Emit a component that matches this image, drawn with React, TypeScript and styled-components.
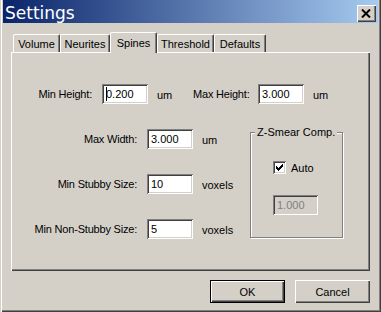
import React from "react";
import styled, { createGlobalStyle } from "styled-components";

const FACE = "#d4d0c8";
const SHADOW = "#808080";
const DARK = "#404040";

const GlobalStyle = createGlobalStyle`
  html, body {
    margin: 0;
    padding: 0;
    background: ${FACE};
  }
  body {
    font-family: "Liberation Sans", Arial, sans-serif;
    font-size: 11px;
    color: #000;
  }
`;

const Window = styled.div`
  width: 381px;
  height: 312px;
  box-sizing: border-box;
  background: ${FACE};
  box-shadow: inset 1px 0 ${FACE}, inset 2px 0 #fff, inset -1px -1px ${DARK},
    inset -2px -2px ${SHADOW};
  display: flex;
  flex-direction: column;
`;

const TitleBar = styled.div`
  margin: 0 3px;
  height: 23px;
  background: linear-gradient(to right, #0a246a, #a6caf0);
  display: flex;
  align-items: center;
  justify-content: space-between;
`;

const TitleText = styled.span`
  font-family: "DejaVu Sans", Verdana, sans-serif;
  font-size: 17px;
  line-height: 19px;
  height: 23px;
  box-sizing: border-box;
  padding: 4px 0 0 2px;
  color: #fff;
`;

const CloseButton = styled.div`
  width: 19px;
  height: 17px;
  margin: 4px 2px 0 0;
  background: ${FACE};
  box-shadow: inset 1px 1px #fff, inset -1px -1px ${DARK}, inset -2px -2px ${SHADOW};
  display: flex;
  align-items: center;
  justify-content: center;
  padding-right: 1px;
  box-sizing: border-box;
`;

const Body = styled.div`
  padding: 9px 11px 0;
  display: flex;
  flex-direction: column;
`;

const TabRow = styled.div`
  display: flex;
  align-items: flex-end;
  height: 20px;
  padding-left: 2px;
  position: relative;
  z-index: 1;
`;

const Tab = styled.div<{ $active?: boolean; $w: number }>`
  width: ${p => p.$w}px;
  height: ${p => (p.$active ? 21 : 18)}px;
  margin-bottom: ${p => (p.$active ? -1 : 0)}px;
  padding-bottom: ${p => (p.$active ? 1 : 0)}px;
  box-sizing: border-box;
  background: ${FACE};
  border-top: 1px solid #fff;
  border-left: 1px solid #fff;
  border-right: 1px solid ${DARK};
  border-radius: 2px 2px 0 0;
  box-shadow: inset -1px 0 ${SHADOW};
  display: flex;
  align-items: center;
  justify-content: center;
  white-space: nowrap;
`;

const Panel = styled.div`
  height: 219px;
  box-sizing: border-box;
  box-shadow: inset 1px 1px #fff, inset -1px -1px ${DARK}, inset -2px -2px ${SHADOW};
  padding-top: 32px;
  display: flex;
  flex-direction: column;
  gap: 25px;
`;

const TopRow = styled.div`
  display: grid;
  grid-template-columns: 91px 46px 45px 65px 46px auto;
  align-items: center;
  height: 20px;
`;

const Section = styled.div`
  display: flex;
  align-items: flex-start;
`;

const FieldGrid = styled.div`
  display: grid;
  grid-template-columns: 136px 46px 57px;
  grid-auto-rows: 20px;
  row-gap: 25px;
  align-items: center;
`;

const Label = styled.span`
  text-align: right;
  padding-right: 10px;
  white-space: nowrap;
  letter-spacing: -0.2px;
`;

const Unit = styled.span`
  padding: 2px 0 0 9px;
  white-space: nowrap;
`;

const TextBox = styled.div<{ $disabled?: boolean; $w?: number }>`
  width: ${p => p.$w ?? 46}px;
  height: 20px;
  box-sizing: border-box;
  background: ${p => (p.$disabled ? FACE : "#fff")};
  color: ${p => (p.$disabled ? SHADOW : "#000")};
  box-shadow: inset 1px 1px ${SHADOW}, inset -1px -1px #fff, inset 2px 2px ${DARK},
    inset -2px -2px ${FACE};
  padding-left: 4px;
  display: flex;
  align-items: center;
  white-space: nowrap;
`;

const Caret = styled.span`
  display: inline-block;
  width: 1px;
  height: 14px;
  background: #000;
  margin-right: -1px;
`;

const GroupBox = styled.div`
  width: 93px;
  height: 106px;
  margin-top: 3px;
  box-sizing: border-box;
  border: 1px solid ${SHADOW};
  box-shadow: inset 1px 1px #fff, 1px 1px #fff;
  display: flex;
  flex-direction: column;
  align-items: flex-start;
`;

const GroupTitle = styled.span`
  margin: -7px 0 0 4px;
  padding: 0 2px;
  line-height: 13px;
  background: ${FACE};
  white-space: nowrap;
`;

const CheckRow = styled.div`
  margin: 22px 0 0 22px;
  display: flex;
  align-items: center;
  gap: 5px;
`;

const CheckBox = styled.div`
  width: 13px;
  height: 13px;
  box-sizing: border-box;
  background: #fff;
  box-shadow: inset 1px 1px ${SHADOW}, inset -1px -1px #fff, inset 2px 2px ${DARK},
    inset -2px -2px ${FACE};
  display: flex;
  align-items: center;
  justify-content: center;
`;

const GroupField = styled.div`
  margin: 21px 0 0 22px;
`;

const ButtonRow = styled.div`
  display: flex;
  justify-content: flex-end;
  gap: 10px;
  margin-top: 9px;
`;

const Button = styled.div<{ $default?: boolean }>`
  width: 75px;
  height: 23px;
  box-sizing: border-box;
  background: ${FACE};
  border: ${p => (p.$default ? "1px solid #000" : "none")};
  box-shadow: inset 1px 1px #fff, inset -1px -1px ${DARK}, inset -2px -2px ${SHADOW};
  display: flex;
  align-items: center;
  justify-content: center;
`;

const tabs = [
  { name: "Volume", w: 47 },
  { name: "Neurites", w: 50 },
  { name: "Spines", w: 47 },
  { name: "Threshold", w: 57 },
  { name: "Defaults", w: 52 },
];

const fields = [
  { label: "Max Width:", value: "3.000", unit: "um" },
  { label: "Min Stubby Size:", value: "10", unit: "voxels" },
  { label: "Min Non-Stubby Size:", value: "5", unit: "voxels" },
];

const CloseGlyph = () => (
  <svg width="10" height="9" viewBox="0 0 10 9">
    <path d="M1 0.5 L9 8.5 M9 0.5 L1 8.5" stroke="#000" strokeWidth="2" />
  </svg>
);

const CheckGlyph = () => (
  <svg width="7" height="7" viewBox="0 0 7 7" shapeRendering="crispEdges">
    <polygon points="0,2 2,4 6,0 7,0 7,3 2,7 0,5" fill="#000" />
  </svg>
);

export default function App() {
  return (
    <>
      <GlobalStyle />
      <Window>
        <TitleBar>
          <TitleText>Settings</TitleText>
          <CloseButton>
            <CloseGlyph />
          </CloseButton>
        </TitleBar>
        <Body>
          <TabRow>
            {tabs.map(t => (
              <Tab key={t.name} $w={t.w} $active={t.name === "Spines"}>
                {t.name}
              </Tab>
            ))}
          </TabRow>
          <Panel>
            <TopRow>
              <Label>Min Height:</Label>
              <TextBox>
                <Caret />
                0.200
              </TextBox>
              <Unit>um</Unit>
              <Label>Max Height:</Label>
              <TextBox>3.000</TextBox>
              <Unit>um</Unit>
            </TopRow>
            <Section>
              <FieldGrid>
                {fields.map(f => (
                  <React.Fragment key={f.label}>
                    <Label>{f.label}</Label>
                    <TextBox>{f.value}</TextBox>
                    <Unit>{f.unit}</Unit>
                  </React.Fragment>
                ))}
              </FieldGrid>
              <GroupBox>
                <GroupTitle>Z-Smear Comp.</GroupTitle>
                <CheckRow>
                  <CheckBox>
                    <CheckGlyph />
                  </CheckBox>
                  Auto
                </CheckRow>
                <GroupField>
                  <TextBox $disabled $w={45}>
                    1.000
                  </TextBox>
                </GroupField>
              </GroupBox>
            </Section>
          </Panel>
          <ButtonRow>
            <Button $default>OK</Button>
            <Button>Cancel</Button>
          </ButtonRow>
        </Body>
      </Window>
    </>
  );
}
